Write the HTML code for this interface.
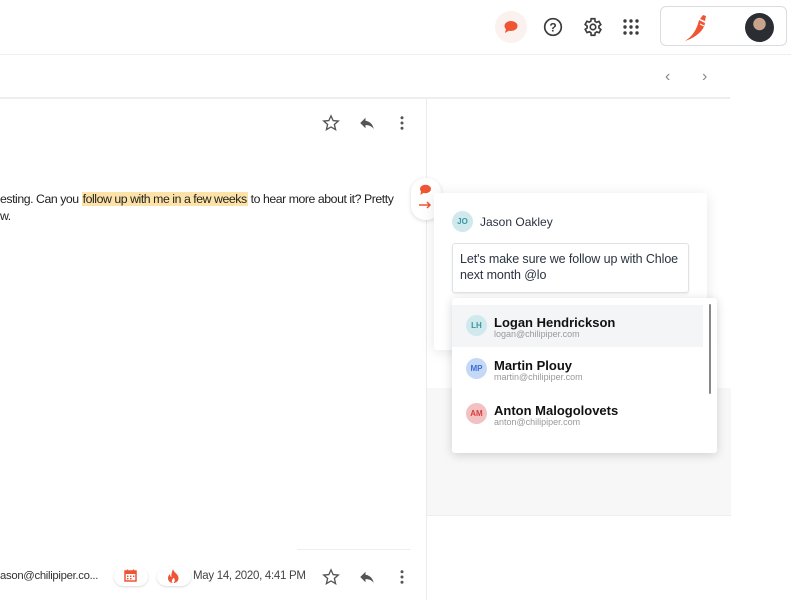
<!DOCTYPE html>
<html><head><style>
body{margin:0;width:791px;height:600px;overflow:hidden;background:#fff;font-family:"Liberation Sans",Arial,sans-serif;position:relative}
.a{position:absolute}
.ico{position:absolute}
.av{position:absolute;width:21px;height:21px;border-radius:50%;font-size:8px;font-weight:bold;display:flex;align-items:center;justify-content:center}
.nm{position:absolute;font-size:13px;font-weight:bold;color:#111}
.em{position:absolute;font-size:9px;color:#999}
</style></head><body>
<div class="a" style="left:0;top:54px;width:791px;height:1px;background:#eceef0"></div>
<div class="a" style="left:495px;top:11px;width:32px;height:32px;border-radius:50%;background:#fbf1ef"></div>
<svg class="ico" style="left:503px;top:19px" width="16" height="16" viewBox="0 0 16 16"><ellipse cx="8" cy="7" rx="6.5" ry="5" fill="#ef5533"/><path d="M3 10 L2 14 L7 11Z" fill="#ef5533"/></svg>
<svg class="ico" style="left:543px;top:17px" width="20" height="20" viewBox="0 0 20 20"><circle cx="10" cy="10" r="8.3" fill="none" stroke="#3c3c3c" stroke-width="1.7"/><text x="10" y="14.5" font-size="12" text-anchor="middle" font-family="Liberation Sans" fill="#3c3c3c" font-weight="bold">?</text></svg>
<svg class="ico" style="left:582px;top:16px" width="22" height="22" viewBox="0 0 24 24"><path fill="none" stroke="#3c3c3c" stroke-width="1.8" d="M19.4 13a7.5 7.5 0 000-2l2.1-1.6-2-3.5-2.5 1a7 7 0 00-1.7-1L15 3h-4l-.4 2.7a7 7 0 00-1.7 1l-2.5-1-2 3.5L6.6 11a7.5 7.5 0 000 2l-2.1 1.6 2 3.5 2.5-1a7 7 0 001.7 1L11 21h4l.4-2.7a7 7 0 001.7-1l2.5 1 2-3.5z" transform="translate(-1 0)"/><circle cx="12" cy="12" r="3" fill="none" stroke="#3c3c3c" stroke-width="1.8"/></svg>
<svg class="ico" style="left:623px;top:19px" width="16" height="16" viewBox="0 0 16 16" fill="#3c3c3c"><circle cx="2" cy="2" r="1.7"/><circle cx="8" cy="2" r="1.7"/><circle cx="14" cy="2" r="1.7"/><circle cx="2" cy="8" r="1.7"/><circle cx="8" cy="8" r="1.7"/><circle cx="14" cy="8" r="1.7"/><circle cx="2" cy="14" r="1.7"/><circle cx="8" cy="14" r="1.7"/><circle cx="14" cy="14" r="1.7"/></svg>
<div class="a" style="left:660px;top:6px;width:127px;height:40px;border:1px solid #dadce0;border-radius:6px;box-sizing:border-box"></div>
<svg class="ico" style="left:682px;top:12px" width="28" height="30" viewBox="0 0 28 30"><path d="M17 8 L23 11 C22 18 15 25 3 29 C11 24 15 17 17 8Z" fill="#ef5533"/><path d="M18 7 L21 3 L24 4 L23 9Z" fill="#ef5533"/><path d="M18 12 L22 14" stroke="#fff" stroke-width="1"/></svg>
<div class="a" style="left:745px;top:13px;width:29px;height:29px;border-radius:50%;background:radial-gradient(circle at 50% 38%,#c9a28c 0 26%,#2a2e33 28%)"></div>
<div class="a" style="left:665px;top:68px;font-size:16px;color:#888">&#8249;</div>
<div class="a" style="left:702px;top:68px;font-size:16px;color:#888">&#8250;</div>
<div class="a" style="left:0;top:97px;width:730px;height:2px;background:#eceef0"></div>
<div class="a" style="left:426px;top:99px;width:1px;height:501px;background:#ececec"></div>
<div class="a" style="left:427px;top:388px;width:304px;height:127px;background:#f7f7f8"></div>
<div class="a" style="left:427px;top:515px;width:304px;height:1px;background:#eee"></div>
<svg class="ico" style="left:322px;top:114px" width="18" height="18" viewBox="0 0 24 24"><path d="M12 2.5l2.9 6.3 6.8.6-5.2 4.6 1.6 6.8L12 17.3l-6.1 3.5 1.6-6.8L2.3 9.4l6.8-.6z" fill="none" stroke="#555" stroke-width="1.8"/></svg>
<svg class="ico" style="left:358px;top:114px" width="18" height="18" viewBox="0 0 24 24"><path d="M10 9V5l-7 7 7 7v-4.1c5 0 8.5 1.6 11 5.1-1-5-4-10-11-11z" fill="#555"/></svg>
<svg class="ico" style="left:393px;top:114px" width="18" height="18" viewBox="0 0 24 24" fill="#555"><circle cx="12" cy="5" r="2"/><circle cx="12" cy="12" r="2"/><circle cx="12" cy="19" r="2"/></svg>
<div class="a" style="left:0;top:191px;font-size:12.3px;letter-spacing:-0.45px;color:#222;line-height:17px;white-space:nowrap">esting. Can you <span style="background:#fde3a7;padding:0 1px">follow up with me in a few weeks</span> to hear more about it? Pretty<br>w.</div>
<div class="a" style="left:411px;top:178px;width:30px;height:42px;border-radius:14px;background:#fff;box-shadow:0 1px 4px rgba(0,0,0,.15)"></div>
<svg class="ico" style="left:419px;top:184px" width="13" height="12" viewBox="0 0 13 12"><ellipse cx="6.5" cy="5" rx="5.5" ry="4.2" fill="#ef5533"/><path d="M2 7 L1.5 11 L5 8.5Z" fill="#ef5533"/></svg>
<svg class="ico" style="left:419px;top:201px" width="13" height="8" viewBox="0 0 13 8"><path d="M0 4H11M8 1l3 3-3 3" stroke="#ef5533" stroke-width="1.5" fill="none"/></svg>
<div class="a" style="left:434px;top:193px;width:273px;height:157px;background:#fff;border-radius:3px;box-shadow:0 2px 14px rgba(0,0,0,.1)"></div>
<div class="av" style="left:452px;top:211px;background:#cfe9ec;color:#3a97a3">JO</div>
<div class="a" style="left:480px;top:215px;font-size:12px;color:#2a3340">Jason Oakley</div>
<div class="a" style="left:452px;top:243px;width:237px;height:50px;border:1px solid #e0e2e6;border-radius:3px;box-sizing:border-box;box-shadow:0 1px 2px rgba(0,0,0,.08)"></div>
<div class="a" style="left:460px;top:251px;font-size:12.5px;letter-spacing:-0.1px;color:#2a3340;line-height:16px">Let's make sure we follow up with Chloe<br>next month @lo</div>
<div class="a" style="left:452px;top:298px;width:265px;height:155px;background:#fff;border-radius:3px;box-shadow:0 2px 10px rgba(0,0,0,.16)"></div>
<div class="a" style="left:452px;top:305px;width:251px;height:42px;background:#f4f5f7"></div>
<div class="a" style="left:709px;top:304px;width:2px;height:90px;background:#888;border-radius:1px"></div>
<div class="av" style="left:466px;top:315px;background:#cfe9ec;color:#3a97a3">LH</div>
<div class="nm" style="left:494px;top:315px">Logan Hendrickson</div>
<div class="em" style="left:494px;top:329px">logan@chilipiper.com</div>
<div class="av" style="left:466px;top:358px;background:#c5d8f5;color:#3c6fd8">MP</div>
<div class="nm" style="left:494px;top:358px">Martin Plouy</div>
<div class="em" style="left:494px;top:372px">martin@chilipiper.com</div>
<div class="av" style="left:466px;top:403px;background:#f2c1c1;color:#d83c3c">AM</div>
<div class="nm" style="left:494px;top:403px">Anton Malogolovets</div>
<div class="em" style="left:494px;top:417px">anton@chilipiper.com</div>
<div class="a" style="left:297px;top:549px;width:114px;height:1px;background:#eee"></div>
<div class="a" style="left:0;top:570px;font-size:11.3px;letter-spacing:-0.3px;color:#333">ason@chilipiper.co...</div>
<div class="a" style="left:114px;top:567px;width:34px;height:19px;border-radius:10px;box-shadow:0 1px 2px rgba(0,0,0,.15);background:#fff"></div>
<svg class="ico" style="left:124px;top:569px" width="13" height="13" viewBox="0 0 13 13"><rect x="1" y="2" width="11" height="10" fill="none" stroke="#ef5533" stroke-width="1.5"/><rect x="1" y="2" width="11" height="3" fill="#ef5533"/><path d="M3.5 0.5v3M9.5 0.5v3" stroke="#ef5533" stroke-width="1.3"/><g fill="#ef5533"><rect x="3" y="6.5" width="1.5" height="1.5"/><rect x="6" y="6.5" width="1.5" height="1.5"/><rect x="9" y="6.5" width="1.5" height="1.5"/><rect x="3" y="9" width="1.5" height="1.5"/><rect x="6" y="9" width="1.5" height="1.5"/></g></svg>
<div class="a" style="left:157px;top:567px;width:34px;height:19px;border-radius:10px;box-shadow:0 1px 2px rgba(0,0,0,.15);background:#fff"></div>
<svg class="ico" style="left:167px;top:569px" width="13" height="14" viewBox="0 0 13 14"><path d="M6 0C7 4 12 5 11.5 10 11 13 8 14 6.5 14 3 14 1 12 1 9 1 7 2.5 5.5 3 5 3 7 4 8 4.5 8 4 5 5 3 6 0Z" fill="#ef5533"/><path d="M6.5 14C5 14 4.5 12.5 5 11 5.5 10 6.5 9.5 6.5 8.5 8 10 8.5 12 6.5 14Z" fill="#fff"/></svg>
<div class="a" style="left:193px;top:570px;font-size:11.5px;letter-spacing:-0.3px;color:#444">May 14, 2020, 4:41 PM</div>
<svg class="ico" style="left:322px;top:568px" width="18" height="18" viewBox="0 0 24 24"><path d="M12 2.5l2.9 6.3 6.8.6-5.2 4.6 1.6 6.8L12 17.3l-6.1 3.5 1.6-6.8L2.3 9.4l6.8-.6z" fill="none" stroke="#555" stroke-width="1.8"/></svg>
<svg class="ico" style="left:358px;top:568px" width="18" height="18" viewBox="0 0 24 24"><path d="M10 9V5l-7 7 7 7v-4.1c5 0 8.5 1.6 11 5.1-1-5-4-10-11-11z" fill="#555"/></svg>
<svg class="ico" style="left:393px;top:568px" width="18" height="18" viewBox="0 0 24 24" fill="#555"><circle cx="12" cy="5" r="2"/><circle cx="12" cy="12" r="2"/><circle cx="12" cy="19" r="2"/></svg>
</body></html>
